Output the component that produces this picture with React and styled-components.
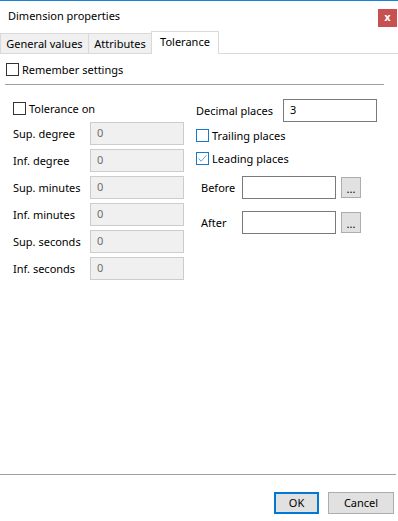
import styled, { createGlobalStyle } from "styled-components";

const GlobalStyle = createGlobalStyle`
  html, body {
    margin: 0;
    padding: 0;
    background: #fff;
  }
  body {
    font-family: "Noto Sans", "Open Sans", sans-serif;
    font-size: 11px;
    color: #000;
  }
  * {
    box-sizing: border-box;
  }
`;

const toleranceRows = [
  "Sup. degree",
  "Inf. degree",
  "Sup. minutes",
  "Inf. minutes",
  "Sup. seconds",
  "Inf. seconds",
];

const CheckMark = () => (
  <svg width="11" height="11" viewBox="0 0 11 11">
    <path d="M1.5 5.5 L4.2 8.2 L9.5 2.2" fill="none" stroke="#6aa6dd" strokeWidth="1" />
  </svg>
);

const CheckField = ({ label, checked, accent }) => (
  <CheckRow>
    <Box $accent={accent}>{checked && <CheckMark />}</Box>
    <span>{label}</span>
  </CheckRow>
);

const App = () => {
  return (
    <Window>
      <GlobalStyle />
      <TitleBar>
        <Title>Dimension properties</Title>
        <CloseBtn>x</CloseBtn>
      </TitleBar>
      <TabStrip>
        <Tab $w={89}>General values</Tab>
        <Tab $w={64}>Attributes</Tab>
        <Tab $w={68} $active>
          Tolerance
        </Tab>
      </TabStrip>
      <Content>
        <RememberRow>
          <CheckField label="Remember settings" />
        </RememberRow>
        <Separator />
        <Columns>
          <LeftCol>
            <CheckField label="Tolerance on" />
            <FieldList>
              {toleranceRows.map((name) => (
                <FieldRow key={name}>
                  <Label $w={77}>{name}</Label>
                  <TextBox $disabled>0</TextBox>
                </FieldRow>
              ))}
            </FieldList>
          </LeftCol>
          <RightCol>
            <FieldRow>
              <Label $w={87}>Decimal places</Label>
              <TextBox>3</TextBox>
            </FieldRow>
            <Spaced $top={7}>
              <CheckField label="Trailing places" accent />
            </Spaced>
            <Spaced $top={10}>
              <CheckField label="Leading places" accent checked />
            </Spaced>
            <AffixRow $top={11}>
              <Label $w={41}>Before</Label>
              <TextBox />
              <DotsBtn>...</DotsBtn>
            </AffixRow>
            <AffixRow $top={12}>
              <Label $w={41}>After</Label>
              <TextBox />
              <DotsBtn>...</DotsBtn>
            </AffixRow>
          </RightCol>
        </Columns>
      </Content>
      <Footer>
        <Button $default $w={45}>
          OK
        </Button>
        <Button $w={66}>Cancel</Button>
      </Footer>
    </Window>
  );
};

const Window = styled.div`
  display: flex;
  flex-direction: column;
  height: 521px;
  width: 398px;
  border-top: 1px solid #1883d7;
  background: #fff;
`;

const TitleBar = styled.div`
  display: flex;
  justify-content: space-between;
  align-items: flex-start;
  height: 30px;
  padding-left: 8px;
  padding-right: 1px;
`;

const Title = styled.div`
  margin-top: 7px;
  line-height: 16px;
`;

const CloseBtn = styled.div`
  margin-top: 8px;
  width: 19px;
  height: 18px;
  background: #c75050;
  color: #fff;
  font-family: "DejaVu Sans", sans-serif;
  font-weight: bold;
  font-size: 10px;
  display: flex;
  align-items: center;
  justify-content: center;
  padding-bottom: 2px;
`;

const TabStrip = styled.div`
  display: flex;
  align-items: flex-end;
  height: 23px;
  border-bottom: 1px solid #d9d9d9;
`;

const Tab = styled.div`
  width: ${(p) => p.$w}px;
  height: ${(p) => (p.$active ? 23 : 20)}px;
  margin-left: ${(p) => (p.$active ? -1 : 0)}px;
  margin-bottom: ${(p) => (p.$active ? -1 : 0)}px;
  border: 1px solid #d9d9d9;
  border-bottom: none;
  background: ${(p) => (p.$active ? "#fff" : "#f0f0f0")};
  display: flex;
  align-items: center;
  justify-content: center;
  padding-bottom: ${(p) => (p.$active ? 3 : 0)}px;
  position: relative;
  white-space: nowrap;

  & + & {
    margin-left: -1px;
  }
`;

const Content = styled.div`
  flex: 1;
  display: flex;
  flex-direction: column;
`;

const RememberRow = styled.div`
  padding: 9px 0 0 6px;
`;

const CheckRow = styled.div`
  display: flex;
  align-items: center;
  height: 13px;
  gap: 3px;
  white-space: nowrap;
`;

const Box = styled.div`
  width: 13px;
  height: 13px;
  border: 1px solid ${(p) => (p.$accent ? "#1979ca" : "#333")};
  background: #fff;
  display: flex;
  align-items: center;
  justify-content: center;
`;

const Separator = styled.div`
  margin: 8px 0 0 5px;
  width: 379px;
  height: 1px;
  background: #a0a0a0;
`;

const Columns = styled.div`
  display: flex;
  gap: 12px;
  margin-top: 14px;
  padding-left: 13px;
`;

const LeftCol = styled.div`
  width: 171px;
  padding-top: 3px;
`;

const FieldList = styled.div`
  display: flex;
  flex-direction: column;
  gap: 4px;
  margin-top: 7px;
`;

const FieldRow = styled.div`
  display: flex;
  align-items: center;
`;

const Label = styled.div`
  width: ${(p) => p.$w}px;
  white-space: nowrap;
`;

const TextBox = styled.div`
  width: 94px;
  height: 23px;
  border: 1px solid ${(p) => (p.$disabled ? "#cccccc" : "#7a7a7a")};
  background: ${(p) => (p.$disabled ? "#f0f0f0" : "#fff")};
  color: ${(p) => (p.$disabled ? "#6d6d6d" : "#000")};
  padding: 0 6px;
  display: flex;
  align-items: center;
  padding-bottom: 2px;
`;

const RightCol = styled.div`
  display: flex;
  flex-direction: column;
`;

const Spaced = styled.div`
  margin-top: ${(p) => p.$top}px;
`;

const AffixRow = styled.div`
  display: flex;
  align-items: center;
  margin-top: ${(p) => p.$top}px;
  padding-left: 5px;
`;

const DotsBtn = styled.div`
  width: 20px;
  height: 21px;
  margin-left: 5px;
  background: #e1e1e1;
  border: 1px solid #adadad;
  display: flex;
  justify-content: center;
  align-items: flex-end;
  padding-bottom: 3px;
  font-size: 11px;
  line-height: 11px;
`;

const Footer = styled.div`
  height: 47px;
  margin-right: 2px;
  border-top: 1px solid #a0a0a0;
  display: flex;
  justify-content: flex-end;
  align-items: flex-start;
  gap: 9px;
  padding: 17px 2px 0 0;
`;

const Button = styled.div`
  width: ${(p) => p.$w}px;
  height: 22px;
  background: #e1e1e1;
  border: ${(p) => (p.$default ? "2px solid #0078d7" : "1px solid #adadad")};
  display: flex;
  align-items: center;
  justify-content: center;
  padding-bottom: 1px;
`;

export default App;
